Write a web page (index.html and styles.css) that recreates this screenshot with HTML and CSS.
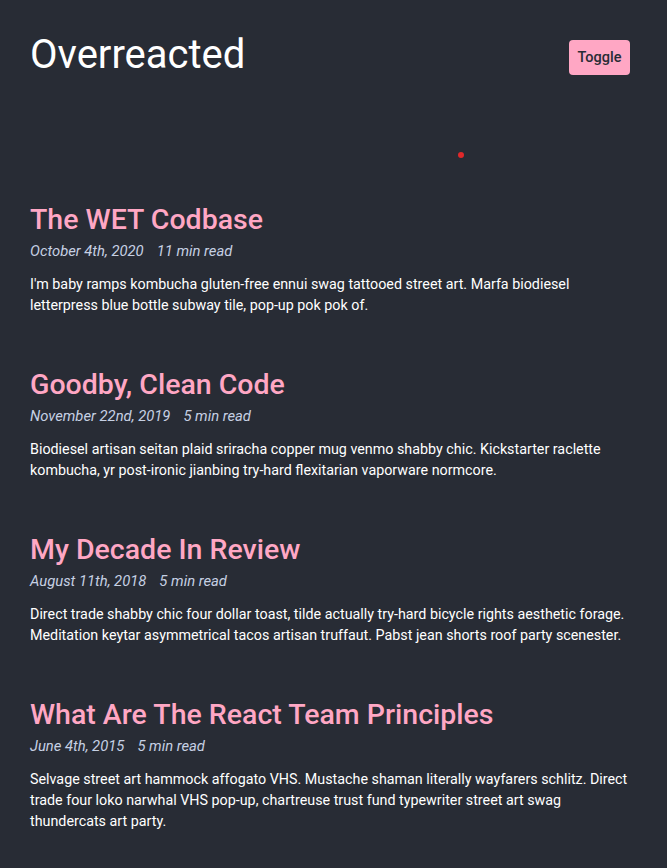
FILE: index.html
```html
<!DOCTYPE html>
<html>
<head>
<meta charset="utf-8">
<link rel="stylesheet" href="styles.css">
</head>
<body>
<div class="page">
  <header class="header">
    <h1 class="brand">Overreacted</h1>
    <button class="toggle">Toggle</button>
  </header>
  <span class="dot"></span>
  <main class="posts">
    <article class="post">
      <h2 class="post-title">The WET Codbase</h2>
      <p class="meta"><span>October 4th, 2020</span><span>11 min read</span></p>
      <p class="excerpt">I'm baby ramps kombucha gluten-free ennui swag tattooed street art. Marfa biodiesel letterpress blue bottle subway tile, pop-up pok pok of.</p>
    </article>
    <article class="post">
      <h2 class="post-title">Goodby, Clean Code</h2>
      <p class="meta"><span>November 22nd, 2019</span><span>5 min read</span></p>
      <p class="excerpt">Biodiesel artisan seitan plaid sriracha copper mug venmo shabby chic. Kickstarter raclette kombucha, yr post-ironic jianbing try-hard flexitarian vaporware normcore.</p>
    </article>
    <article class="post">
      <h2 class="post-title">My Decade In Review</h2>
      <p class="meta"><span>August 11th, 2018</span><span>5 min read</span></p>
      <p class="excerpt">Direct trade shabby chic four dollar toast, tilde actually try-hard bicycle rights aesthetic forage. Meditation keytar asymmetrical tacos artisan truffaut. Pabst jean shorts roof party scenester.</p>
    </article>
    <article class="post">
      <h2 class="post-title">What Are The React Team Principles</h2>
      <p class="meta"><span>June 4th, 2015</span><span>5 min read</span></p>
      <p class="excerpt">Selvage street art hammock affogato VHS. Mustache shaman literally wayfarers schlitz. Direct trade four loko narwhal VHS pop-up, chartreuse trust fund typewriter street art swag thundercats art party.</p>
    </article>
  </main>
</div>
</body>
</html>
```
FILE: styles.css
```css
html, body {
  margin: 0;
  padding: 0;
  background: #282c35;
}
body {
  font-family: Roboto, "Liberation Sans", sans-serif;
  color: #ffffff;
}
.page {
  position: relative;
  padding: 0 37px 0 30px;
  min-height: 868px;
  box-sizing: border-box;
}
.header {
  display: flex;
  justify-content: space-between;
  align-items: flex-start;
  padding-top: 31px;
}
.brand {
  margin: 0;
  font-size: 40px;
  font-weight: 400;
  line-height: 48px;
  color: #ffffff;
}
.toggle {
  margin-top: 9px;
  background: #ffa7c4;
  color: #282c35;
  border: none;
  border-radius: 4px;
  font-family: Roboto, "Liberation Sans", sans-serif;
  font-size: 14.5px;
  font-weight: 500;
  width: 61px;
  height: 35px;
  padding: 0;
}
.dot {
  position: absolute;
  left: 458px;
  top: 152px;
  width: 6px;
  height: 6px;
  border-radius: 50%;
  background: #e0282a;
}
.posts {
  padding-top: 123px;
}
.post {
  height: 165px;
}
.post-title {
  margin: 0;
  font-size: 28.5px;
  font-weight: 500;
  line-height: 36px;
  color: #ffa7c4;
}
.meta {
  margin: 3px 0 0;
  font-size: 14.8px;
  font-style: italic;
  line-height: 20px;
  color: #c6d0e3;
}
.meta span + span {
  margin-left: 13px;
}
.excerpt {
  margin: 13px 0 0;
  font-size: 14.3px;
  line-height: 21px;
  color: #ffffff;
}
```
